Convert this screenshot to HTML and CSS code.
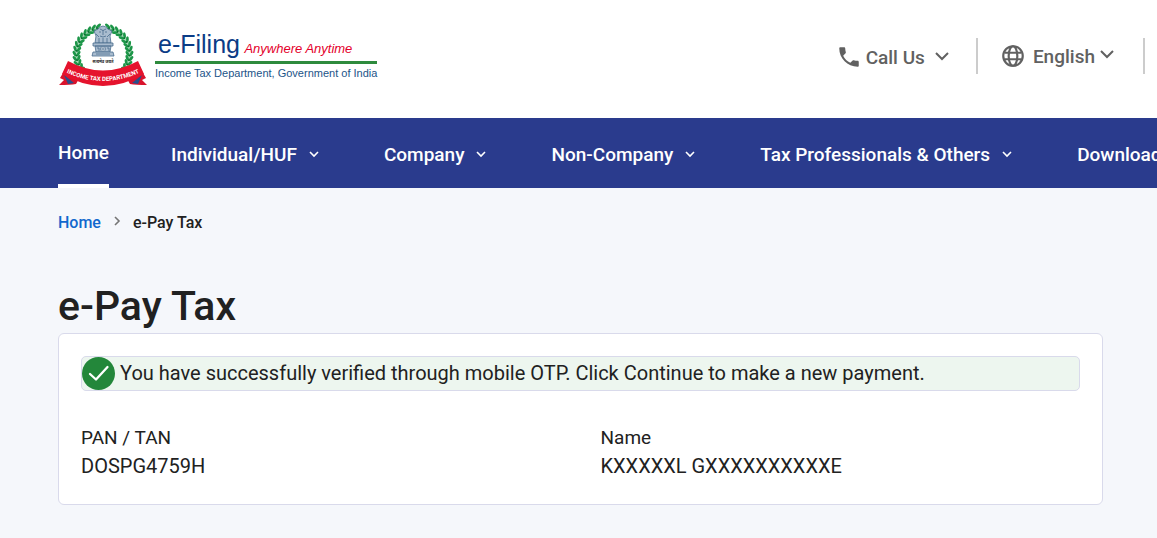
FILE: index.html
```html
<!DOCTYPE html>
<html lang="en">
<head>
    <meta charset="UTF-8">
    <meta name="viewport" content="width=device-width, initial-scale=1.0">
    <title>e-Pay Tax</title>
    <link rel="stylesheet" href="styles.css">
</head>
<body>
    <!-- Header -->
    <header class="header">
        <a href="#" class="logo">
            <svg class="emblem" viewBox="0 0 90 66" role="img" aria-label="Emblem">
                <defs>
                    <path id="ribbon-line" d="M5 48Q45 68 85 48"/>
                    <g id="leaf" fill="#1c9648">
                        <ellipse cx="45" cy="2.500" rx="3" ry="1.400" transform="rotate(32 45 2.500)"/>
                        <ellipse cx="45" cy="6.500" rx="3" ry="1.400" transform="rotate(-32 45 6.500)"/>
                        <circle cx="47" cy="4.500" r=".9" fill="#0d6b30"/>
                    </g>
                    <g id="branch">
                        <path d="M49 5A27 27 0 0 1 66 48" fill="none" stroke="#a9d9b8" stroke-width="5"/>
                        <use href="#leaf" transform="rotate(9 45 31)"/>
                        <use href="#leaf" transform="rotate(19 45 31)"/>
                        <use href="#leaf" transform="rotate(29 45 31)"/>
                        <use href="#leaf" transform="rotate(39 45 31)"/>
                        <use href="#leaf" transform="rotate(49 45 31)"/>
                        <use href="#leaf" transform="rotate(59 45 31)"/>
                        <use href="#leaf" transform="rotate(69 45 31)"/>
                        <use href="#leaf" transform="rotate(79 45 31)"/>
                        <use href="#leaf" transform="rotate(89 45 31)"/>
                        <use href="#leaf" transform="rotate(99 45 31)"/>
                        <use href="#leaf" transform="rotate(109 45 31)"/>
                        <use href="#leaf" transform="rotate(119 45 31)"/>
                        <use href="#leaf" transform="rotate(129 45 31)"/>
                        <use href="#leaf" transform="rotate(139 45 31)"/>
                    </g>
                </defs>
                <use href="#branch"/>
                <use href="#branch" transform="matrix(-1 0 0 1 90 0)"/>
                <!-- Lion capital -->
                <g fill="#a9bccf" stroke="#4a6c8e" stroke-width=".8">
                    <path d="M40 6q5-6 10 0l4 2-2 5 1 7H37l1-7-2-5z"/>
                    <path d="M42 6q3 3 6 0M41 9h2m4 0h2M45 7v5m-3 1q3 2 6 0M41 15v5m4-5v5m4-5v5M38 11l3 3m11-3l-3 3" fill="none"/>
                    <path d="M35 20h20v3H35zM37 23h16l-1 6H38z"/>
                    <path d="M35 29h20l1 4H34z"/>
                    <circle cx="45" cy="26" r="2.500" fill="#fff"/>
                    <path d="M45 24v4M43 26h4M39 25h2v3m8-3h2v3M38 31h14" fill="none"/>
                </g>
                <text class="emblem-motto" x="45" y="40">सत्यमेव जयते</text>
                <!-- Ribbon -->
                <path d="M8 45L2 55L6 57L1 62Q12 62 18 61L22 54ZM82 45L88 55L84 57L89 62Q78 62 72 61L68 54Z" fill="#d9132c"/>
                <path d="M6 52L16 60L10 61ZM84 52L74 60L80 61Z" fill="#27508c"/>
                <path d="M10 38Q45 57 80 38L86 51Q45 75 4 51Z" fill="#e5132d"/>
                <text class="emblem-ribbon"><textPath href="#ribbon-line" startOffset="50%">INCOME TAX DEPARTMENT</textPath></text>
            </svg>
            <span class="logo-text">
                <span class="logo-top"><span class="logo-name">e-Filing</span> <em class="logo-tagline">Anywhere Anytime</em></span>
                <span class="logo-dept">Income Tax Department, Government of India</span>
            </span>
        </a>
        <div class="header-actions">
            <button type="button" class="header-button">
                <svg class="icon-phone" viewBox="0 0 24 24"><path fill="currentColor" d="M6.620 10.790c1.440 2.830 3.760 5.140 6.590 6.590l2.200-2.200c.27-.27.67-.36 1.020-.24 1.120.37 2.330.57 3.570.57.55 0 1 .45 1 1V20c0 .55-.45 1-1 1-9.390 0-17-7.610-17-17 0-.55.45-1 1-1h3.500c.55 0 1 .45 1 1 0 1.250.2 2.450.57 3.570.11.350.03.740-.250 1.020z"/></svg>
                Call Us
                <svg class="icon-chevron" viewBox="0 0 16 16"><path d="M2 4l6 6 6-6"/></svg>
            </button>
            <button type="button" class="header-button language">
                <svg class="icon-globe" viewBox="0 0 24 24"><circle cx="12" cy="12" r="9"/><ellipse cx="12" cy="12" rx="4" ry="9"/><path d="M4 9h16M4 15h16"/></svg>
                English
                <svg class="icon-chevron" viewBox="0 0 16 16"><path d="M2 3l6 6 6-6"/></svg>
            </button>
        </div>
    </header>

    <!-- Main menu -->
    <nav class="main-menu">
        <a href="#" class="menu-item active">Home</a>
        <a href="#" class="menu-item">Individual/HUF <svg class="menu-arrow" viewBox="0 0 16 16"><path d="M4 6l4 4 4-4"/></svg></a>
        <a href="#" class="menu-item">Company <svg class="menu-arrow" viewBox="0 0 16 16"><path d="M4 6l4 4 4-4"/></svg></a>
        <a href="#" class="menu-item">Non-Company <svg class="menu-arrow" viewBox="0 0 16 16"><path d="M4 6l4 4 4-4"/></svg></a>
        <a href="#" class="menu-item">Tax Professionals &amp; Others <svg class="menu-arrow" viewBox="0 0 16 16"><path d="M4 6l4 4 4-4"/></svg></a>
        <a href="#" class="menu-item">Downloads</a>
    </nav>

    <main class="content">
        <div class="breadcrumb">
            <a href="#">Home</a>
            <svg class="breadcrumb-arrow" viewBox="0 0 10 16"><path d="M3 2l4 4-4 4"/></svg>
            <span>e-Pay Tax</span>
        </div>

        <h1>e-Pay Tax</h1>

        <section class="card">
            <div class="success-message">
                <svg class="icon-success" viewBox="0 0 33 33"><circle cx="16.500" cy="16.500" r="16.500" fill="#23873a"/><path d="M8 17l6 5.500L25.500 10" fill="none" stroke="#fff" stroke-width="2.300" stroke-linecap="round" stroke-linejoin="round"/></svg>
                <span>You have successfully verified through mobile OTP. Click Continue to make a new payment.</span>
            </div>
            <dl class="details">
                <div>
                    <dt>PAN / TAN</dt>
                    <dd>DOSPG4759H</dd>
                </div>
                <div>
                    <dt>Name</dt>
                    <dd>KXXXXXL GXXXXXXXXXXE</dd>
                </div>
            </dl>
        </section>
    </main>
</body>
</html>
```
FILE: styles.css
```css
* {
    box-sizing: border-box;
}

body {
    font-family: Roboto, Arial, sans-serif;
    background-color: #f5f7fb;
    margin: 0;
    color: #212121;
    overflow-x: hidden;
}

a {
    text-decoration: none;
}

svg {
    flex: none;
}

/* Header */
.header {
    display: flex;
    justify-content: space-between;
    align-items: center;
    height: 118px;
    padding: 0 12px 6px 58px;
    background-color: #fff;
}

.logo {
    display: flex;
    gap: 7px;
}

.emblem {
    width: 90px;
    height: 66px;
}

.emblem-motto {
    font: bold 4px "Noto Sans", sans-serif;
    fill: #222;
    text-anchor: middle;
}

.emblem-ribbon {
    font: bold 6px Roboto, sans-serif;
    fill: #fff;
    text-anchor: middle;
}

.logo-text {
    display: flex;
    flex-direction: column;
    padding-top: 9px;
    font-family: "Liberation Sans", Arial, sans-serif;
    white-space: nowrap;
}

.logo-top {
    padding: 0 3px;
    border-bottom: 3px solid #2e8b3d;
    line-height: 25px;
}

.logo-name {
    font-size: 25px;
    color: #0b3c86;
}

.logo-tagline {
    font-size: 13px;
    color: #e4002b;
}

.logo-dept {
    font-size: 11px;
    line-height: 18px;
    color: #1c5488;
}

.header-actions {
    display: flex;
    align-items: center;
}

.header-button {
    display: flex;
    align-items: center;
    height: 36px;
    padding: 2px 26px 0;
    border: none;
    border-right: 2px solid #ccc;
    background: none;
    font-family: inherit;
    font-size: 19px;
    font-weight: 500;
    color: #616161;
    cursor: pointer;
}

.language {
    padding: 0 28px 0 22px;
}

.icon-phone {
    width: 26px;
    height: 26px;
    margin-right: 4px;
}

.icon-globe {
    width: 26px;
    height: 26px;
    margin-right: 7px;
    fill: none;
    stroke: currentColor;
    stroke-width: 2;
}

.icon-chevron {
    width: 16px;
    height: 16px;
    margin-left: 9px;
    fill: none;
    stroke: currentColor;
    stroke-width: 2;
}

.language .icon-chevron {
    margin-left: 4px;
}

/* Main menu */
.main-menu {
    display: flex;
    gap: 62px;
    height: 70px;
    padding-left: 58px;
    background-color: #2a3b8d;
    overflow: hidden;
}

.menu-item {
    display: flex;
    flex: none;
    align-items: center;
    gap: 9px;
    padding-top: 2px;
    font-size: 19px;
    font-weight: 500;
    color: #fff;
    white-space: nowrap;
}

.menu-item.active {
    border-bottom: 4px solid #fff;
}

.menu-arrow {
    width: 16px;
    height: 16px;
    fill: none;
    stroke: currentColor;
    stroke-width: 1.6;
}

/* Page content */
.content {
    padding: 25px 54px 32px 58px;
}

.breadcrumb {
    display: flex;
    align-items: center;
    gap: 11px;
    font-size: 16px;
    font-weight: 500;
    line-height: 20px;
}

.breadcrumb a {
    color: #1168cd;
}

.breadcrumb-arrow {
    width: 10px;
    height: 16px;
    fill: none;
    stroke: #757575;
    stroke-width: 1.6;
}

h1 {
    margin: 47px 0 0;
    font-size: 41px;
    font-weight: 500;
    line-height: 53px;
}

.card {
    padding: 22px 22px 23px;
    border: 1px solid #d9daeb;
    border-radius: 6px;
    background-color: #fff;
}

.success-message {
    display: flex;
    align-items: center;
    gap: 5px;
    border: 1px solid #d9daeb;
    border-radius: 5px;
    background-color: #edf6ef;
    font-size: 20px;
}

.success-message span {
    padding-bottom: 2px;
}

.icon-success {
    width: 33px;
    height: 33px;
}

/* Taxpayer details */
.details {
    display: grid;
    grid-template-columns: 1fr 1fr;
    gap: 40px;
    margin: 32px 0 0;
    font-size: 19px;
    line-height: 29px;
}

.details dd {
    margin: 0;
    font-size: 20px;
}
```
